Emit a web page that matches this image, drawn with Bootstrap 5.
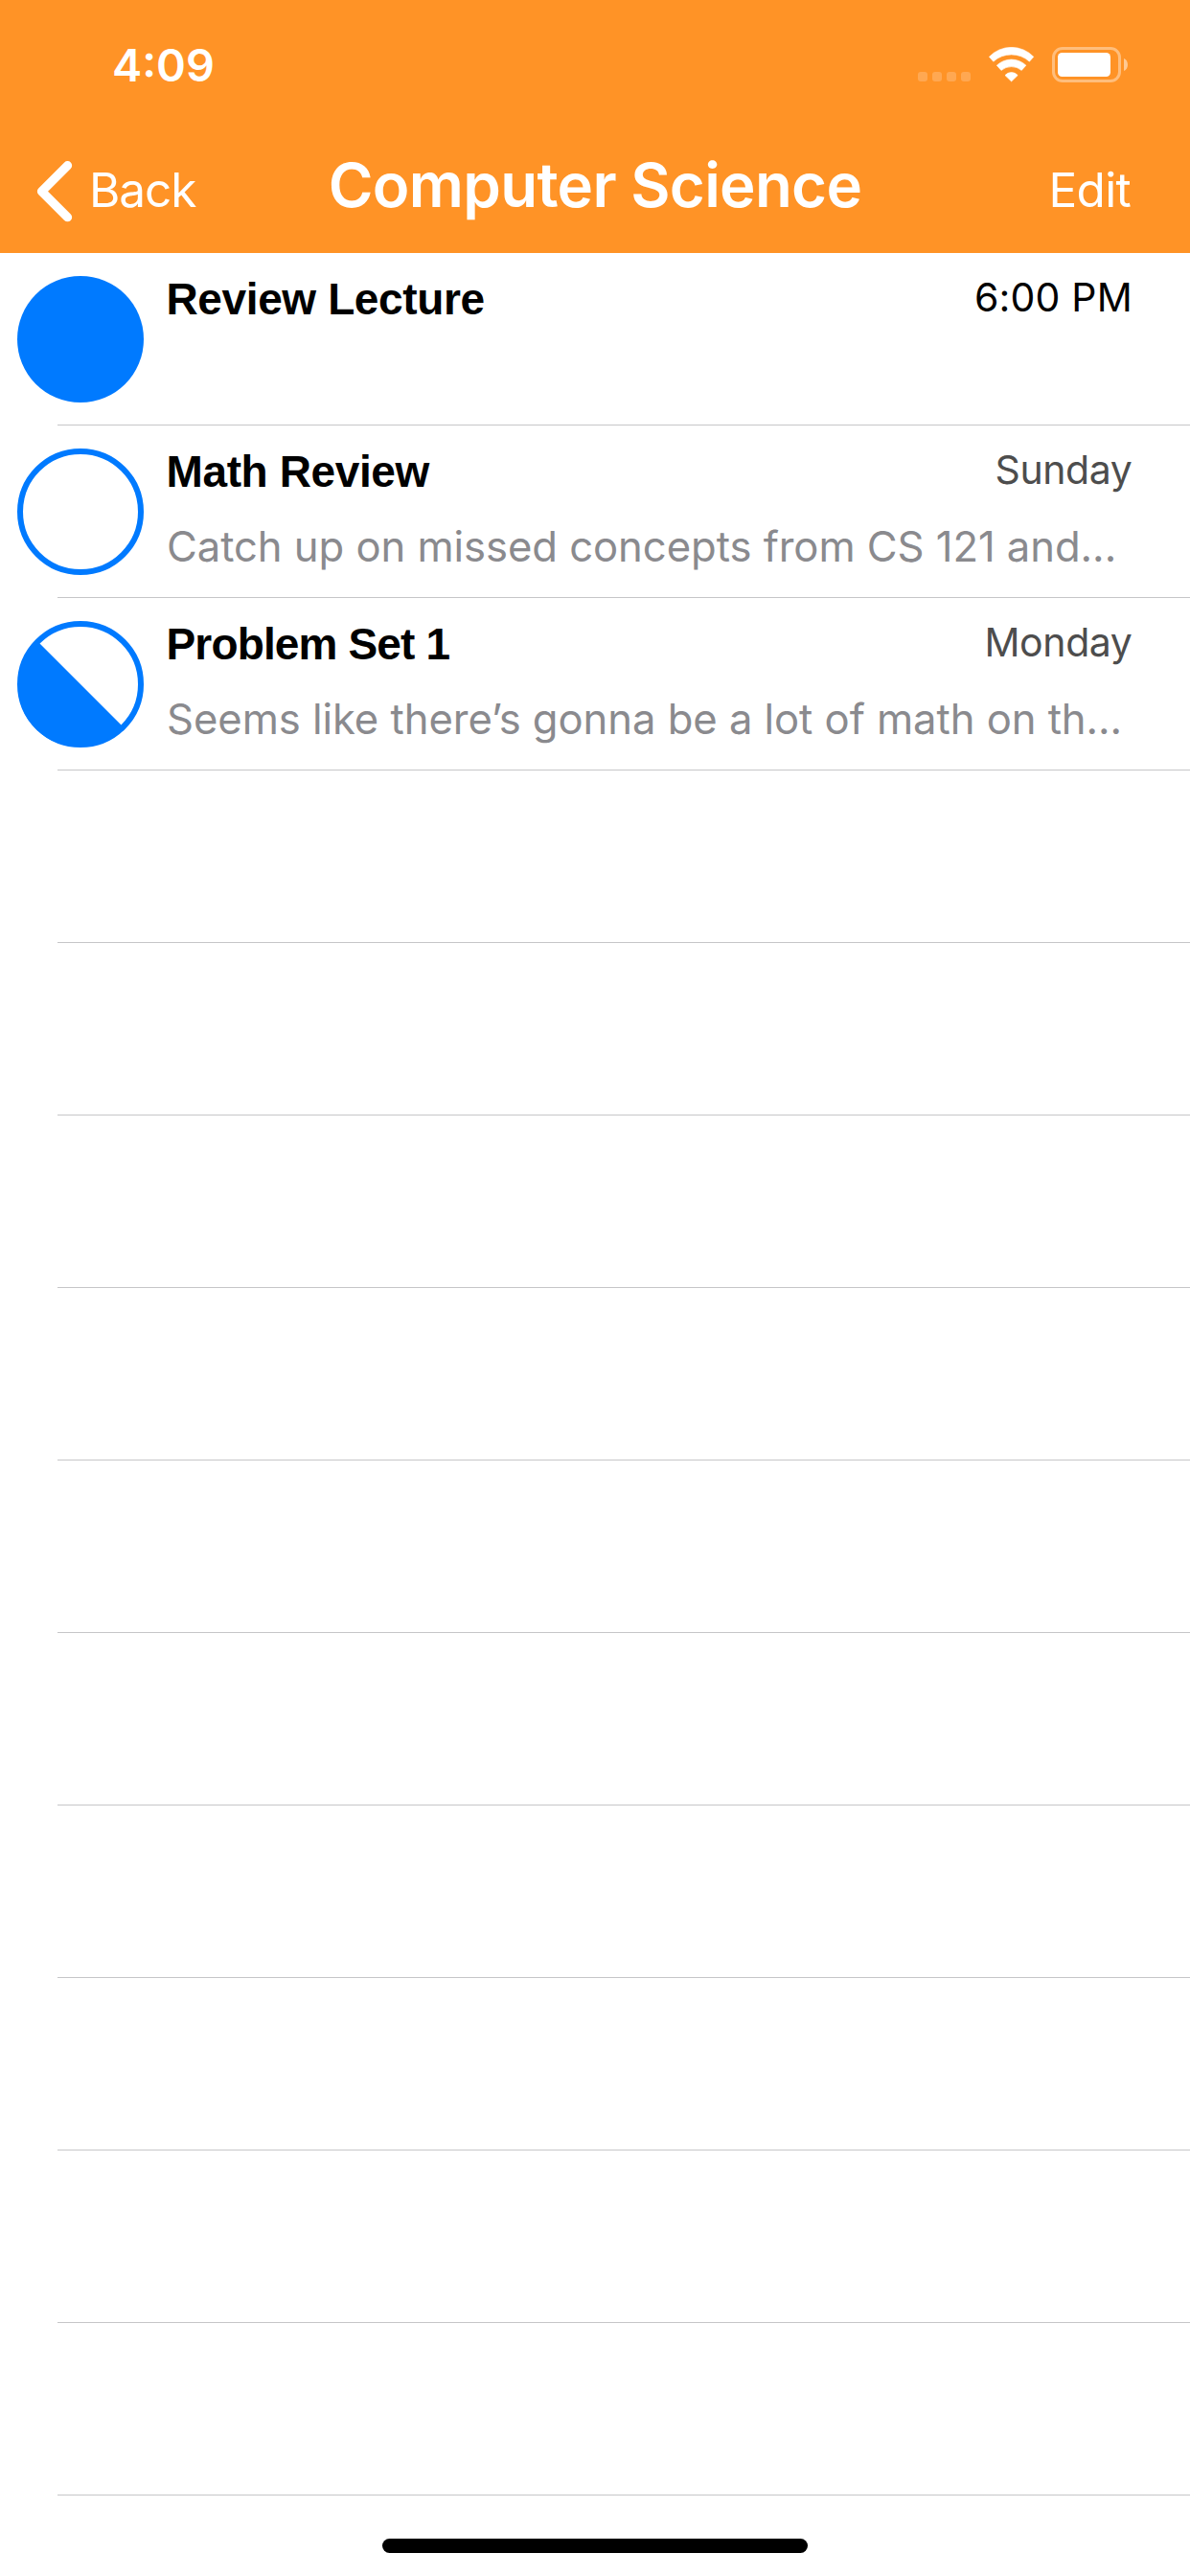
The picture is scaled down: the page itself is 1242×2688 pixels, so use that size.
<!DOCTYPE html>
<html lang="en">
<head>
<meta charset="utf-8">
<meta name="viewport" content="width=device-width, initial-scale=1">
<title>Computer Science</title>
<link href="https://cdn.jsdelivr.net/npm/bootstrap@5.3.0/dist/css/bootstrap.min.css" rel="stylesheet">
<style>
  body { font-family: Inter, "Liberation Sans", sans-serif; background: #fff; color: #000; }
  svg { display: block; }
  .phone { width: 1242px; height: 2688px; }
  .top-area { background: #ff9326; color: #fff; height: 264px; }
  .status-bar { height: 132px; padding: 38px 65px 0 117px; }
  .clock { font-size: 46.8px; font-weight: 600; line-height: 60px; }
  .status-icons { padding-top: 11px; }
  .nav-bar { display: grid; grid-template-columns: 1fr auto 1fr; height: 132px; padding-top: 21px; }
  .nav-title { font-size: 63.5px; font-weight: 600; line-height: 80px; letter-spacing: -.69px; }
  .nav-action { font-size: 49.5px; line-height: 60px; padding-top: 15px; color: #fff; text-decoration: none; }
  .nav-back { padding-left: 37px; letter-spacing: -1.05px; }
  .nav-edit { padding-right: 62px; letter-spacing: -.69px; }
  .back-label { padding-left: 15px; }
  .task-row { height: 180px; padding-left: 18px; }
  .task-row::after { content: ""; display: block; height: 1px; margin: -1px 0 0 42px; background: #c6c6c8; }
  .task-body { height: 180px; padding-right: 60px; }
  .status-circle { margin-top: 24px; margin-right: 23px; }
  .task-text { padding-top: 21px; min-width: 0; }
  .task-name { font-family: "Liberation Sans", Arial, sans-serif; font-weight: 700; font-size: 46px; line-height: 54px; letter-spacing: -.38px; padding-left: .5px; }
  .tighter { letter-spacing: -.85px; }
  .task-time { font-size: 41px; line-height: 54px; margin-top: -2px; letter-spacing: .2px; }
  .task-day { color: #4d4d4d; letter-spacing: -.4px; margin-right: .5px; }
  .task-note { font-size: 43.6px; line-height: 54px; margin-top: 25px; padding-left: 1px; letter-spacing: -.05px; color: #8a8a8e; }
  .home-area { height: 84px; padding-top: 45px; }
  .home-bar { width: 444px; height: 15px; background: #000; }
</style>
</head>
<body>
<div class="phone overflow-hidden d-flex flex-column">
  <header class="top-area">
    <div class="status-bar d-flex justify-content-between align-items-start">
      <div class="clock">4:09</div>
      <div class="status-icons">
        <svg width="219" height="38" viewBox="0 0 219 38" fill="#fff">
          <g opacity=".2">
            <rect x="0" y="26" width="10" height="10" rx="3"/>
            <rect x="15" y="26" width="10" height="10" rx="3"/>
            <rect x="30" y="26" width="10" height="10" rx="3"/>
            <rect x="45" y="26" width="10" height="10" rx="3"/>
          </g>
          <g transform="translate(74 0)" stroke="#fff" stroke-width=".6" stroke-linejoin="round">
            <path d="M.4 10.3A32 32 0 0 1 46.8 10.3L42.4 15.2A28 28 0 0 0 4.8 15.2Z"/>
            <path d="M8.3 19.2A22.2 22.2 0 0 1 38.9 19.2L34.2 24.4A16.7 16.7 0 0 0 13 24.4Z"/>
            <path d="M17 29.6A8.6 8.6 0 0 1 30.2 29.6L23.6 35.9Z"/>
          </g>
          <rect x="141.500" y="1.500" width="69" height="34" rx="9.500" fill="none" stroke="#fff" stroke-width="3" opacity=".4"/>
          <rect x="146" y="6" width="55" height="25" rx="4.500"/>
          <path d="M215 12C220.300 14 220.300 23 215 25Z" opacity=".5"/>
        </svg>
      </div>
    </div>
    <nav class="nav-bar">
      <a href="#" class="nav-action nav-back d-flex align-items-start">
        <svg width="41" height="66" viewBox="0 0 41 66" fill="none" stroke="#fff" stroke-width="9.300" stroke-linecap="round" stroke-linejoin="round"><path d="M33.500 3.500L6.500 30.500L33.500 57.500" transform="translate(0 1.200)"/></svg>
        <span class="back-label">Back</span>
      </a>
      <div class="nav-title text-nowrap">Computer Science</div>
      <a href="#" class="nav-action nav-edit text-end">Edit</a>
    </nav>
  </header>

  <main>
    <div class="task-row">
      <div class="task-body d-flex align-items-start">
        <svg class="status-circle flex-shrink-0" width="132" height="132" viewBox="0 0 132 132"><circle cx="66" cy="66" r="66" fill="#007aff"/></svg>
        <div class="task-text flex-grow-1">
          <div class="d-flex justify-content-between align-items-start"><div class="task-name">Review Lecture</div><div class="task-time">6:00 PM</div></div>
        </div>
      </div>
    </div>
    <div class="task-row">
      <div class="task-body d-flex align-items-start">
        <svg class="status-circle flex-shrink-0" width="132" height="132" viewBox="0 0 132 132"><circle cx="66" cy="66" r="63" fill="none" stroke="#007aff" stroke-width="6"/></svg>
        <div class="task-text flex-grow-1">
          <div class="d-flex justify-content-between align-items-start"><div class="task-name">Math Review</div><div class="task-time task-day">Sunday</div></div>
          <div class="task-note text-nowrap">Catch up on missed concepts from CS 121 and...</div>
        </div>
      </div>
    </div>
    <div class="task-row">
      <div class="task-body d-flex align-items-start">
        <svg class="status-circle flex-shrink-0" width="132" height="132" viewBox="0 0 132 132"><circle cx="66" cy="66" r="63" fill="none" stroke="#007aff" stroke-width="6"/><path d="M21.500 21.500A63 63 0 1 0 110.500 110.500Z" fill="#007aff"/></svg>
        <div class="task-text flex-grow-1">
          <div class="d-flex justify-content-between align-items-start"><div class="task-name tighter">Problem Set 1</div><div class="task-time task-day">Monday</div></div>
          <div class="task-note text-nowrap">Seems like there’s gonna be a lot of math on th...</div>
        </div>
      </div>
    </div>
    <div class="task-row"><div class="task-body"></div></div>
    <div class="task-row"><div class="task-body"></div></div>
    <div class="task-row"><div class="task-body"></div></div>
    <div class="task-row"><div class="task-body"></div></div>
    <div class="task-row"><div class="task-body"></div></div>
    <div class="task-row"><div class="task-body"></div></div>
    <div class="task-row"><div class="task-body"></div></div>
    <div class="task-row"><div class="task-body"></div></div>
    <div class="task-row"><div class="task-body"></div></div>
    <div class="task-row"><div class="task-body"></div></div>
  </main>

  <footer class="home-area"><div class="home-bar rounded-pill mx-auto"></div></footer>
</div>
<script src="https://cdn.jsdelivr.net/npm/bootstrap@5.3.0/dist/js/bootstrap.bundle.min.js"></script>
</body>
</html>
